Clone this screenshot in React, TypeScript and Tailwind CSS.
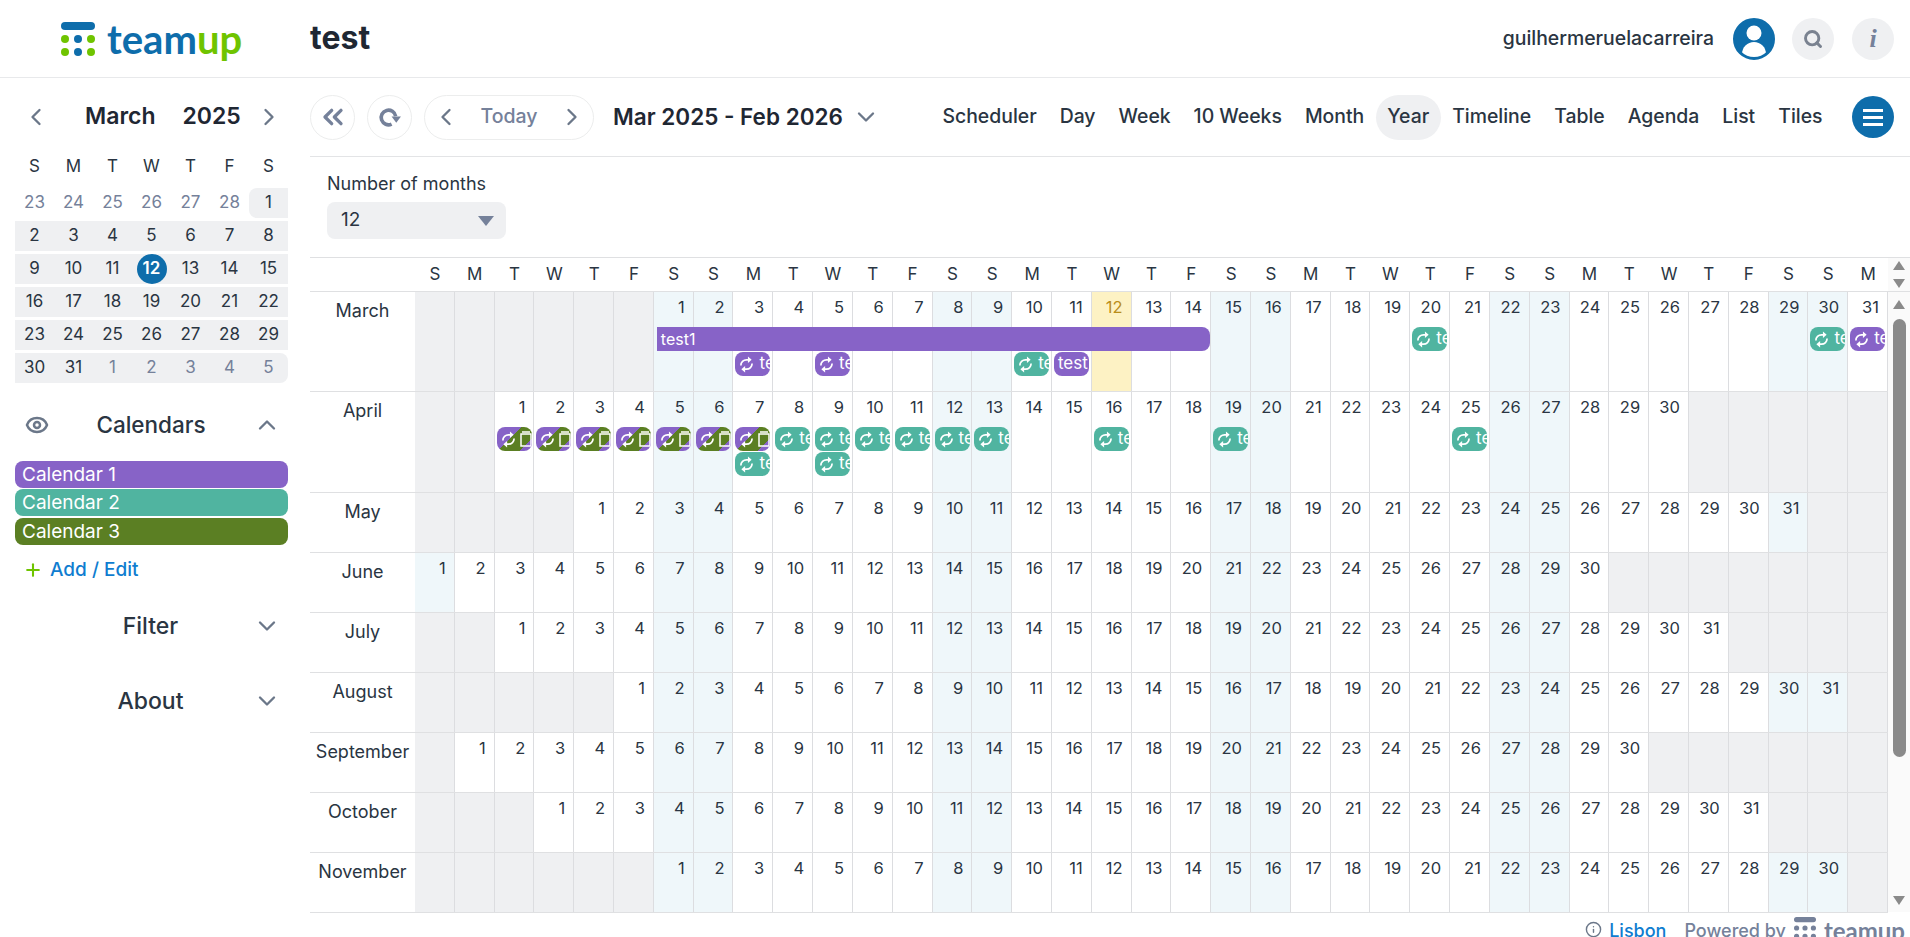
import {ChevronDown, ChevronLeft, ChevronRight, ChevronUp, ChevronsLeft, Eye, Info, Plus, Search} from 'lucide-react'
import clsx from 'clsx'
import React from 'react'

const WEEK = ['S', 'M', 'T', 'W', 'T', 'F', 'S']
const HEAD = Array.from({length: 37}, (_, i) => WEEK[i % 7])

const MONTHS = [
  {name: 'March', start: 6, days: 31, h: 'h-[100px]'},
  {name: 'April', start: 2, days: 30, h: 'h-[101px]'},
  {name: 'May', start: 4, days: 31, h: 'h-[60px]'},
  {name: 'June', start: 0, days: 30, h: 'h-[60px]'},
  {name: 'July', start: 2, days: 31, h: 'h-[60px]'},
  {name: 'August', start: 5, days: 31, h: 'h-[60px]'},
  {name: 'September', start: 1, days: 30, h: 'h-[60px]'},
  {name: 'October', start: 3, days: 31, h: 'h-[60px]'},
  {name: 'November', start: 6, days: 30, h: 'h-[60px]'},
]

type Chip = 'purple' | 'green' | 'stripe' | 'text' | null

// lanes of chips per month and day
const CHIPS: Record<string, Record<number, Chip[]>> = {
  March: {
    3: [null, 'purple'],
    5: [null, 'purple'],
    10: [null, 'green'],
    11: [null, 'text'],
    20: ['green'],
    30: ['green'],
    31: ['purple'],
  },
  April: {
    1: ['stripe'],
    2: ['stripe'],
    3: ['stripe'],
    4: ['stripe'],
    5: ['stripe'],
    6: ['stripe'],
    7: ['stripe', 'green'],
    8: ['green'],
    9: ['green', 'green'],
    10: ['green'],
    11: ['green'],
    12: ['green'],
    13: ['green'],
    16: ['green'],
    19: ['green'],
    25: ['green'],
  },
}

const MINI = [
  ['23', '24', '25', '26', '27', '28', '1'],
  ['2', '3', '4', '5', '6', '7', '8'],
  ['9', '10', '11', '12', '13', '14', '15'],
  ['16', '17', '18', '19', '20', '21', '22'],
  ['23', '24', '25', '26', '27', '28', '29'],
  ['30', '31', '1', '2', '3', '4', '5'],
]

function LogoMark({bar, a, b}: {bar: string; a: string; b: string}) {
  const dots = [a, b, a, a, b, a]
  return (
    <svg viewBox="0 0 34 34" className="h-full w-full">
      <rect x="0" y="0" width="34" height="8" rx="4" fill={bar} />
      {dots.map((c, i) => (
        <circle key={i} cx={4 + (i % 3) * 13} cy={i < 3 ? 17 : 30} r="4" fill={c} />
      ))}
    </svg>
  )
}

function RepeatIcon() {
  return (
    <svg viewBox="0 0 16 18" className="h-[17px] w-[15px] shrink-0" fill="none" stroke="white" strokeWidth="1.8">
      <path d="M2 10 A6 6 0 0 1 8 4 H10" />
      <path d="M9.5 0.5 L13.5 4 L9.5 7.5 Z" fill="white" stroke="none" />
      <path d="M14 8 A6 6 0 0 1 8 14 H6" />
      <path d="M6.5 10.5 L2.5 14 L6.5 17.5 Z" fill="white" stroke="none" />
    </svg>
  )
}

function NoteIcon() {
  return (
    <svg viewBox="0 0 12 16" className="ml-[4px] h-[16px] w-[12px] shrink-0" fill="none" stroke="white" strokeWidth="1.5">
      <rect x="1" y="3" width="10" height="12" />
      <path d="M2 1 H10" />
    </svg>
  )
}

function ReloadIcon() {
  return (
    <svg viewBox="0 0 24 24" className="h-[25px] w-[25px] text-[#75819a]" fill="none" stroke="currentColor" strokeWidth="3.5">
      <path d="M14 18.3 A7 7 0 1 1 17.9 10.8" />
      <path d="M14 11 H23 L18.5 17 Z" fill="currentColor" stroke="none" />
    </svg>
  )
}

function Sidebar() {
  return (
    <aside className="flex w-[310px] shrink-0 flex-col">
      <div className="flex h-[76px] items-center pt-[1px] pr-[27px] pl-[22px]">
        <ChevronLeft className="h-7 w-7 text-[#6b7789]" strokeWidth={2} />
        <div className="ml-[35px] text-[23px] font-semibold text-[#1f2733]">March</div>
        <div className="ml-[27px] text-[23px] font-semibold text-[#1f2733]">2025</div>
        <ChevronRight className="ml-auto h-7 w-7 text-[#6b7789]" strokeWidth={2} />
      </div>
      <div className="pr-[22px] pl-[15px]">
        <div className="grid h-[34px] grid-cols-7 items-center pb-[10px] text-center text-[17px] text-[#2a3542]">
          {WEEK.map((d, i) => (
            <div key={i}>{d}</div>
          ))}
        </div>
        <div className="flex flex-col gap-[3px]">
          {MINI.map((row, r) => (
            <div
              key={r}
              className={clsx(
                'grid h-[30px] grid-cols-7 items-center text-center text-[17px]',
                r > 0 && 'bg-[#eff0f2]',
                r === 5 && 'rounded-r-lg',
              )}
            >
              {row.map((d, i) => {
                const dim = (r === 0 && i < 6) || (r === 5 && i > 1)
                const today = r === 2 && i === 3
                const first = r === 0 && i === 6
                return (
                  <div
                    key={i}
                    className={clsx(
                      'flex h-[30px] items-center justify-center',
                      dim ? 'text-[#75819a]' : 'text-[#2a3542]',
                      first && 'rounded-l-lg bg-[#eff0f2]',
                    )}
                  >
                    {today ? (
                      <span className="flex h-[30px] w-[30px] items-center justify-center rounded-full bg-[#0e6dab] font-semibold text-white">
                        {d}
                      </span>
                    ) : (
                      d
                    )}
                  </div>
                )
              })}
            </div>
          ))}
        </div>

        <div className="mt-[20px] flex h-[44px] items-center">
          <Eye className="ml-[10px] h-6 w-6 text-[#6b7789]" strokeWidth={2.5} />
          <div className="flex-1 text-center text-[22.5px] font-medium text-[#2a3542]">Calendars</div>
          <ChevronUp className="mr-[7px] h-7 w-7 text-[#6b7789]" strokeWidth={2} />
        </div>
        <div className="mt-[14px] flex flex-col gap-[1px]">
          <div className="h-[27px] rounded-lg bg-[#8763c7] pl-[7px] text-[19px] leading-[27px] text-white">Calendar 1</div>
          <div className="h-[27px] rounded-lg bg-[#50b4a0] pl-[7px] text-[19px] leading-[27px] text-white">Calendar 2</div>
          <div className="mt-[1px] h-[27px] rounded-lg bg-[#5b7f23] pl-[7px] text-[19px] leading-[27px] text-white">Calendar 3</div>
        </div>
        <div className="mt-[12px] flex h-[26px] items-center pl-[8px] text-[19px] font-medium text-[#0f7dd0]">
          <Plus className="h-[20px] w-[20px] text-[#6fc400]" strokeWidth={2.5} />
          <span className="ml-[7px]">Add / Edit</span>
        </div>
        <div className="mt-[21px] flex h-[44px] items-center">
          <div className="flex-1 pl-[33px] text-center text-[23px] font-medium text-[#2a3542]">Filter</div>
          <ChevronDown className="mr-[7px] h-7 w-7 text-[#6b7789]" strokeWidth={2} />
        </div>
        <div className="mt-[31px] flex h-[44px] items-center">
          <div className="flex-1 pl-[33px] text-center text-[23px] font-medium text-[#2a3542]">About</div>
          <ChevronDown className="mr-[7px] h-7 w-7 text-[#6b7789]" strokeWidth={2} />
        </div>
      </div>
    </aside>
  )
}

function EventChip({kind}: {kind: Chip}) {
  if (!kind) return <div className="h-[24px]" />
  const bg = clsx(
    kind === 'purple' && 'bg-[#8763c7]',
    kind === 'text' && 'bg-[#8763c7]',
    kind === 'green' && 'bg-[#50b4a0]',
    kind === 'stripe' && 'bg-[linear-gradient(135deg,#8763c7_42%,#5b7f23_42%,#5b7f23_78%,#8763c7_78%)]',
  )
  return (
    <div className={clsx('flex h-[24px] w-[35px] items-center overflow-hidden rounded-lg pl-[4px] text-[17px] whitespace-nowrap text-white', bg)}>
      {kind !== 'text' && <RepeatIcon />}
      {kind === 'stripe' && <NoteIcon />}
      {kind === 'text' && <span>test</span>}
      {(kind === 'purple' || kind === 'green') && <span className="ml-[5px]">test</span>}
    </div>
  )
}

function DayCell({month, index}: {month: (typeof MONTHS)[number]; index: number}) {
  const day = index - month.start + 1
  const inMonth = day >= 1 && day <= month.days
  const weekend = index % 7 === 0 || index % 7 === 6
  const today = month.name === 'March' && day === 12
  const lanes = inMonth ? CHIPS[month.name]?.[day] : undefined
  return (
    <div
      className={clsx(
        'relative min-w-0 border-r border-[#dcdde0]',
        !inMonth && 'bg-[#eff0f2]',
        inMonth && weekend && 'bg-[#eff7fa]',
        today && 'bg-[#fdf2c4]',
      )}
    >
      {inMonth && (
        <div className={clsx('h-[35px] pt-[3px] pr-[8px] text-right text-[16.5px] leading-6', today ? 'text-[#b98d1b]' : 'text-[#2a3542]')}>
          {day}
        </div>
      )}
      {lanes && (
        <div className="flex flex-col gap-[1px] pl-[2px]">
          {lanes.map((k, i) => (
            <EventChip key={i} kind={k} />
          ))}
        </div>
      )}
      {month.name === 'March' && day === 1 && (
        <div className="absolute top-[35px] left-[3px] z-10 h-[24px] w-[553px] rounded-r-lg bg-[#8763c7] pl-[4px] text-[16px] leading-6 text-white">
          test1
        </div>
      )}
    </div>
  )
}

function ScrollArrow({up}: {up?: boolean}) {
  return (
    <div
      className={clsx(
        'h-0 w-0 border-x-[6px] border-x-transparent',
        up ? 'border-b-[9px] border-b-[#8a8a8a]' : 'border-t-[9px] border-t-[#8a8a8a]',
      )}
    />
  )
}

function YearGrid() {
  return (
    <div className="flex min-h-0 flex-1 flex-col border-t border-[#dfe0e2]">
      <div className="flex h-[34px] shrink-0 border-b border-[#dfe0e2]">
        <div className="grid flex-1 grid-cols-[105px_repeat(37,minmax(0,1fr))] items-center text-center text-[17px] text-[#2a3542]">
          <div />
          {HEAD.map((d, i) => (
            <div key={i}>{d}</div>
          ))}
        </div>
        <div className="flex w-[22px] shrink-0 flex-col items-center justify-center gap-[9px] bg-[#fafafa]">
          <ScrollArrow up />
          <ScrollArrow />
        </div>
      </div>
      <div className="flex min-h-0 flex-1">
        <div className="flex-1">
          {MONTHS.map(m => (
            <div key={m.name} className={clsx('grid grid-cols-[105px_repeat(37,minmax(0,1fr))] border-b border-[#dfe0e2]', m.h)}>
              <div className="pt-[5px] text-center text-[18px] text-[#2a3542]">{m.name}</div>
              {HEAD.map((_, i) => (
                <DayCell key={i} month={m} index={i} />
              ))}
            </div>
          ))}
        </div>
        <div className="flex w-[22px] shrink-0 flex-col items-center bg-[#fafafa] pt-[8px] pb-[7px]">
          <ScrollArrow up />
          <div className="mt-[10px] h-[438px] w-[13px] rounded-full bg-[#8a8a8a]" />
          <div className="mt-auto">
            <ScrollArrow />
          </div>
        </div>
      </div>
    </div>
  )
}

export default function App() {
  const views = ['Scheduler', 'Day', 'Week', '10 Weeks', 'Month', 'Year', 'Timeline', 'Table', 'Agenda', 'List', 'Tiles']
  return (
    <div className="flex h-[937px] w-[1910px] flex-col overflow-hidden bg-white font-['Inter',sans-serif] text-[#2a3542]">
      <header className="flex h-[78px] shrink-0 items-center border-b border-[#e8e9eb]">
        <div className="ml-[61px] h-[34px] w-[34px]">
          <LogoMark bar="#0e6dab" a="#6fc400" b="#0e6dab" />
        </div>
        <div className="ml-[12px] w-[203px] font-['Lato',sans-serif] text-[40px] leading-none font-bold">
          <span className="text-[#0e6dab]">team</span>
          <span className="text-[#6fc400]">up</span>
        </div>
        <div className="mt-[-2px] text-[32px] font-bold text-[#1f2733]">test</div>
        <div className="ml-auto text-[19.4px] font-medium">guilhermeruelacarreira</div>
        <div className="ml-[19px] flex h-[42px] w-[42px] items-end justify-center overflow-hidden rounded-full border-[3px] border-[#0e6dab] bg-[#0e6dab]">
          <svg viewBox="0 0 36 36" className="h-[36px] w-[36px]">
            <circle cx="18" cy="12" r="7.5" fill="white" />
            <circle cx="18" cy="33" r="12" fill="white" />
          </svg>
        </div>
        <div className="ml-[17px] flex h-[42px] w-[42px] items-center justify-center rounded-full bg-[#eff0f2]">
          <Search className="h-[20px] w-[20px] text-[#7a8290]" strokeWidth={3.5} />
        </div>
        <div className="mr-[16px] ml-[18px] flex h-[42px] w-[42px] items-center justify-center rounded-full bg-[#eff0f2] font-['Liberation_Serif',serif] text-[26px] font-bold text-[#75819a] italic">
          i
        </div>
      </header>

      <div className="flex min-h-0 flex-1">
        <Sidebar />
        <main className="flex min-w-0 flex-1 flex-col">
          <div className="flex h-[79px] shrink-0 items-center border-b border-[#e3e4e6] pr-[16px]">
            <div className="flex h-[45px] w-[45px] items-center justify-center rounded-full border border-[#eceded]">
              <ChevronsLeft className="h-[32px] w-[32px] text-[#75819a]" strokeWidth={2.5} />
            </div>
            <div className="ml-[12px] flex h-[45px] w-[45px] items-center justify-center rounded-full border border-[#eceded]">
              <ReloadIcon />
            </div>
            <div className="ml-[12px] flex h-[45px] w-[170px] items-center justify-between rounded-full border border-[#eceded] px-[7px] text-[19.5px] font-medium text-[#75819a]">
              <ChevronLeft className="h-7 w-7 text-[#6b7789]" strokeWidth={2} />
              <span>Today</span>
              <ChevronRight className="h-7 w-7 text-[#6b7789]" strokeWidth={2} />
            </div>
            <div className="ml-[19px] text-[22.5px] font-semibold text-[#1f2733]">Mar 2025 - Feb 2026</div>
            <ChevronDown className="ml-[9px] h-7 w-7 text-[#6b7789]" strokeWidth={2} />
            <nav className="ml-auto flex items-center">
              {views.map(v => (
                <div
                  key={v}
                  className={clsx(
                    'flex h-[45px] items-center rounded-full px-[11.5px] text-[19.4px] font-medium',
                    v === 'Year' && 'bg-[#eff0f2]',
                  )}
                >
                  {v}
                </div>
              ))}
            </nav>
            <div className="ml-[18px] flex h-[42px] w-[42px] flex-col items-center justify-center gap-[4px] rounded-full bg-[#0e6dab]">
              <div className="h-[3px] w-[20px] bg-white" />
              <div className="h-[3px] w-[20px] bg-white" />
              <div className="h-[3px] w-[20px] bg-white" />
            </div>
          </div>

          <div className="h-[100px] shrink-0 pt-[13px] pl-[17px]">
            <div className="text-[18px]">Number of months</div>
            <div className="mt-[5px] flex h-[37px] w-[179px] items-center justify-between rounded-lg bg-[#eff0f2] pr-[12px] pl-[14px] text-[19px]">
              <span>12</span>
              <div className="h-0 w-0 border-x-[8px] border-t-[10px] border-x-transparent border-t-[#75819a]" />
            </div>
          </div>

          <YearGrid />
        </main>
      </div>

      <footer className="flex h-[25px] shrink-0 items-start justify-end overflow-hidden pt-[5px] pr-[5px] pl-[310px]">
        <Info className="mt-[4px] h-[17px] w-[17px] text-[#6b7789]" strokeWidth={2} />
        <span className="ml-[7px] text-[18px] font-medium text-[#0f7dd0]">Lisbon</span>
        <span className="ml-[18px] text-[18px] font-medium text-[#75819a]">Powered by</span>
        <div className="ml-[8px] h-[22px] w-[22px]">
          <LogoMark bar="#75819a" a="#75819a" b="#75819a" />
        </div>
        <span className="mt-[-4px] ml-[8px] font-['Lato',sans-serif] text-[24px] font-bold text-[#75819a]">teamup</span>
      </footer>
    </div>
  )
}
